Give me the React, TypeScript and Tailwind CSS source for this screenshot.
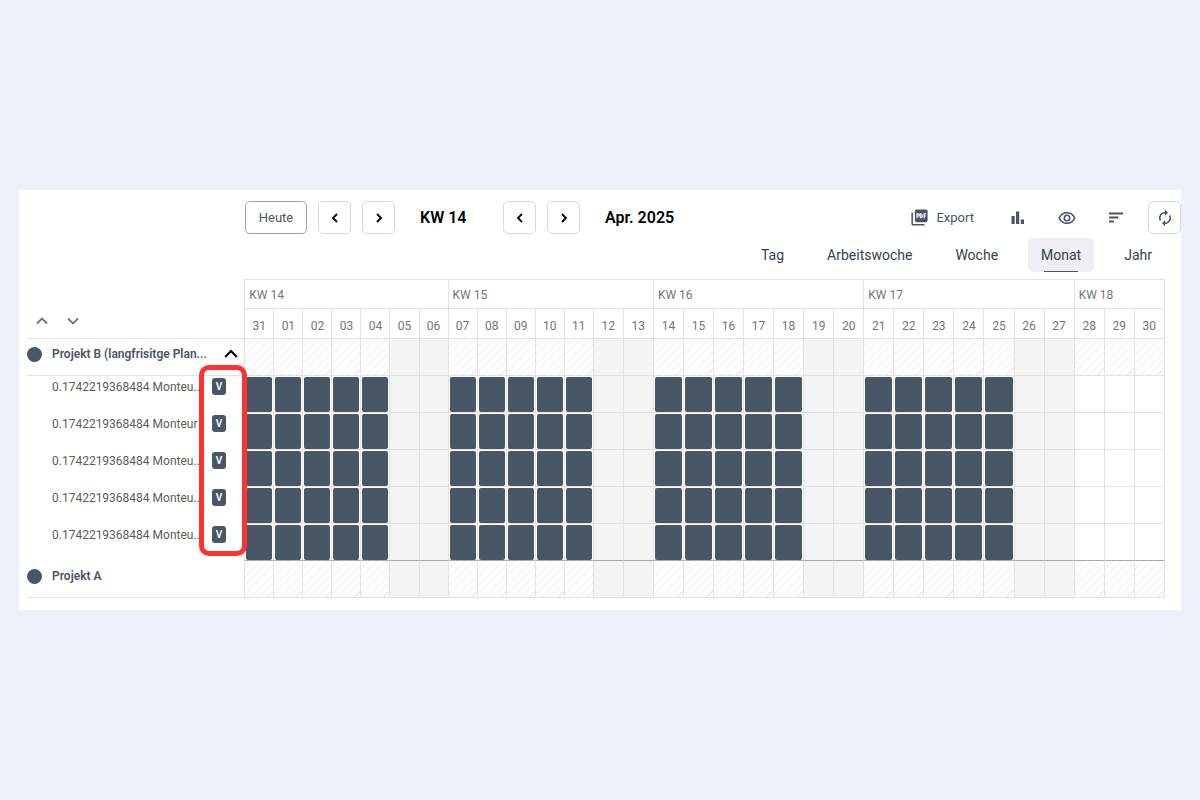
import type { ReactNode } from 'react';

type Week = { label: string; days: string[] };

const weeks: Week[] = [
  { label: 'KW 14', days: ['31', '01', '02', '03', '04', '05', '06'] },
  { label: 'KW 15', days: ['07', '08', '09', '10', '11', '12', '13'] },
  { label: 'KW 16', days: ['14', '15', '16', '17', '18', '19', '20'] },
  { label: 'KW 17', days: ['21', '22', '23', '24', '25', '26', '27'] },
  { label: 'KW 18', days: ['28', '29', '30'] },
];

const days = weeks.flatMap((week, w) =>
  week.days.map((day, d) => ({ day, weekend: d > 4, booked: d < 5 && w < 4 })),
);

const workers = [
  '0.1742219368484 Monteu...',
  '0.1742219368484 Monteur1',
  '0.1742219368484 Monteu...',
  '0.1742219368484 Monteu...',
  '0.1742219368484 Monteu...',
];

const views = ['Tag', 'Arbeitswoche', 'Woche', 'Monat', 'Jahr'];

const hatch =
  'bg-[repeating-linear-gradient(135deg,#ffffff_0px,#ffffff_5px,#ebebeb_5px,#ebebeb_6px)]';

function Chevron({ d, className }: { d: string; className: string }) {
  return (
    <svg viewBox="0 0 12 12" className={className} fill="none" stroke="currentColor" strokeWidth="1.800" aria-hidden="true">
      <path d={d} />
    </svg>
  );
}

const LEFT = 'M8 2 4 6l4 4';
const RIGHT = 'M4 2l4 4-4 4';
const UP = 'M1 8.500 6 3.500l5 5';
const DOWN = 'M1 3.500l5 5 5-5';

function StepButton({ label, d }: { label: string; d: string }) {
  return (
    <button
      type="button"
      aria-label={label}
      className="flex h-[33px] w-[33px] items-center justify-center rounded-[5px] border border-[#d5d9e1] text-black"
    >
      <Chevron d={d} className="h-3 w-3" />
    </button>
  );
}

function ToolButton({ label, boxed, children }: { label: string; boxed?: boolean; children: ReactNode }) {
  return (
    <button
      type="button"
      aria-label={label}
      className={`flex h-[33px] w-[33px] items-center justify-center rounded-[5px] ${boxed ? 'border border-[#d5d9e1]' : ''}`}
    >
      {children}
    </button>
  );
}

function Toolbar() {
  return (
    <div className="flex items-center justify-between pl-[226px]">
      <div className="flex items-center gap-[11px]">
        <button type="button" className="h-[33px] w-[62px] rounded-[5px] border border-[#9aa3af] text-[13px]">
          Heute
        </button>
        <StepButton label="Vorherige Woche" d={LEFT} />
        <StepButton label="Nächste Woche" d={RIGHT} />
        <h2 className="w-[86px] pl-[14px] text-base font-semibold text-black">KW 14</h2>
        <StepButton label="Vorheriger Monat" d={LEFT} />
        <StepButton label="Nächster Monat" d={RIGHT} />
        <h2 className="pl-[14px] text-base font-semibold text-black">Apr. 2025</h2>
      </div>
      <div className="flex items-center gap-4">
        <button type="button" className="mr-[11px] flex h-[33px] items-center gap-2 text-[13px]">
          <svg viewBox="1 1 22 22" className="h-[17px] w-[17px]" aria-hidden="true">
            <path fill="currentColor" d="M20.500 1.500H8c-1.100 0-2 .9-2 2v12.500c0 1.100.9 2 2 2h12.500c1.100 0 2-.9 2-2V3.500c0-1.100-.9-2-2-2zM3.500 5.500h-2v15c0 1.100.9 2 2 2h15v-2h-15z" />
            <path fill="none" stroke="#ffffff" strokeWidth="1.500" d="M8.700 13V7.200h1.500c1.800 0 1.800 2.900 0 2.900H8.700M13 7.200v5h.8c2.400 0 2.400-5 0-5zM18 13V7.200h2.800M18 10h2.300" />
          </svg>
          Export
        </button>
        <ToolButton label="Auslastung">
          <svg viewBox="0 0 14 14" className="h-[14px] w-[14px]" fill="currentColor" aria-hidden="true">
            <path d="M.5 5h3.200v8H.5zM5 .500h3.200V13H5zM9.800 8.500H13V13H9.800z" />
          </svg>
        </ToolButton>
        <ToolButton label="Ansicht">
          <svg viewBox="0 0 18 14" className="h-[14px] w-[18px]" fill="none" stroke="currentColor" strokeWidth="1.600" aria-hidden="true">
            <path d="M1.200 7C2.700 3.600 5.600 1.700 9 1.700s6.300 1.900 7.800 5.300c-1.500 3.400-4.400 5.300-7.800 5.300S2.700 10.400 1.200 7z" />
            <circle cx="9" cy="7" r="2.700" />
          </svg>
        </ToolButton>
        <ToolButton label="Sortieren">
          <svg viewBox="0 0 14 12" className="h-3 w-[14px]" fill="currentColor" aria-hidden="true">
            <path d="M0 .500h14v1.900H0zM0 4.500h9.500v1.900H0zM0 8.500h5v1.900H0z" />
          </svg>
        </ToolButton>
        <ToolButton label="Aktualisieren" boxed>
          <svg viewBox="0 0 24 24" className="h-[18px] w-[18px]" fill="currentColor" aria-hidden="true">
            <path d="M12 6v3l4-4-4-4v3c-4.420 0-8 3.580-8 8 0 1.570.46 3.030 1.240 4.260L6.700 14.800c-.45-.83-.7-1.790-.7-2.800 0-3.310 2.690-6 6-6zm6.760 1.740L17.300 9.200c.44.840.7 1.790.7 2.800 0 3.310-2.690 6-6 6v-3l-4 4 4 4v-3c4.420 0 8-3.580 8-8 0-1.570-.46-3.030-1.240-4.260z" />
          </svg>
        </ToolButton>
      </div>
    </div>
  );
}

function ViewTabs() {
  return (
    <nav className="mt-1 flex justify-end gap-[17px] pr-4 text-[14px] text-[#333f4d]">
      {views.map((view) => (
        <button
          key={view}
          type="button"
          aria-pressed={view === 'Monat'}
          className={`relative h-[34px] rounded-[5px] px-[13px] ${view === 'Monat' ? 'bg-[#eeeff4]' : ''}`}
        >
          {view}
          {view === 'Monat' && <span className="absolute inset-x-4 bottom-0 h-px bg-[#495665]" />}
        </button>
      ))}
    </nav>
  );
}

function ProjectRow({ name, open }: { name: string; open?: boolean }) {
  return (
    <tr className="h-[37px]">
      <th scope="row" className="border-r border-b border-[#e2e2e2] p-0 pt-[7px] text-left align-top">
        <div className="flex items-center pr-[6px] text-[12px] font-semibold">
          <span className="mr-[10px] h-[15px] w-[15px] rounded-full bg-[#495665]" />
          <span className="flex-1 whitespace-nowrap">{name}</span>
          {open && (
            <button type="button" aria-label="Zuklappen" className="text-black">
              <Chevron d={UP} className="h-[14px] w-[14px]" />
            </button>
          )}
        </div>
      </th>
      {days.map(({ day, weekend }) => (
        <td key={day} className={`border-r border-b border-[#e2e2e2] ${weekend ? 'bg-[#f3f5f4]' : hatch}`} />
      ))}
    </tr>
  );
}

function WorkerRow({ name, last }: { name: string; last: boolean }) {
  const line = last ? 'border-b-[#aaaaaa]' : 'border-b-[#e2e2e2]';
  return (
    <tr className="h-[37px]">
      <th scope="row" className="border-r border-[#e2e2e2] p-0 pt-[2px] text-left align-top font-normal">
        <div className="flex items-center pl-[25px]">
          <span className="w-[149px] text-[12px] whitespace-nowrap text-[#5c5c5c]">{name}</span>
          <span className="ml-[11px] flex h-[17px] w-[14px] items-center justify-center rounded-[3px] bg-[#495665] text-[10px] font-semibold text-white">
            V
          </span>
        </div>
      </th>
      {days.map(({ day, weekend, booked }) => (
        <td
          key={day}
          className={`border-r border-b border-r-[#e2e2e2] p-0 px-px pt-px align-top ${line} ${weekend ? 'bg-[#f3f5f4]' : ''}`}
        >
          {booked && <div className="h-[35px] rounded-[2px] bg-[#495665]" />}
        </td>
      ))}
    </tr>
  );
}

export default function App() {
  return (
    <main className="flex min-h-screen items-center bg-[#ecf0f8] px-[19px] font-['Roboto','Liberation_Sans',sans-serif] text-[#495665]">
      <section className="w-full bg-white pt-[11px] pb-3">
        <Toolbar />
        <ViewTabs />
        <div className="relative mt-[7px] mr-4 ml-2">
          <table className="w-full table-fixed border-separate border-spacing-0 text-[12px] leading-4">
            <colgroup>
              <col className="w-[218px]" />
              {days.map(({ day }, i) => (
                <col key={day} className={i < 12 ? 'w-[29px]' : 'w-[30px]'} />
              ))}
            </colgroup>
            <thead className="text-[#757575]">
              <tr className="h-[30px]">
                <th rowSpan={2} aria-label="Projekte" className="border-r border-b border-[#e2e2e2] p-0 pb-[11px] pl-[9px] text-left align-bottom">
                  <div className="flex gap-[19px]">
                    <button type="button" aria-label="Alle zuklappen">
                      <Chevron d={UP} className="h-3 w-3" />
                    </button>
                    <button type="button" aria-label="Alle aufklappen">
                      <Chevron d={DOWN} className="h-3 w-3" />
                    </button>
                  </div>
                </th>
                {weeks.map(({ label, days: weekDays }) => (
                  <th
                    key={label}
                    scope="colgroup"
                    colSpan={weekDays.length}
                    className="border-t border-r border-b border-[#e2e2e2] p-0 pt-[2px] pl-1 text-left font-normal"
                  >
                    {label}
                  </th>
                ))}
              </tr>
              <tr className="h-[30px]">
                {days.map(({ day }) => (
                  <th key={day} scope="col" className="border-r border-b border-[#e2e2e2] p-0 pt-1 text-center font-normal">
                    {day}
                  </th>
                ))}
              </tr>
            </thead>
            <tbody>
              <ProjectRow name="Projekt B (langfrisitge Plan..." open />
              {workers.map((name, i) => (
                <WorkerRow key={i} name={name} last={i === workers.length - 1} />
              ))}
              <ProjectRow name="Projekt A" />
            </tbody>
          </table>
          <div className="pointer-events-none absolute top-[86px] left-[172px] h-[191px] w-12 rounded-[10px] border-[5px] border-[#ff3131]" />
        </div>
      </section>
    </main>
  );
}
